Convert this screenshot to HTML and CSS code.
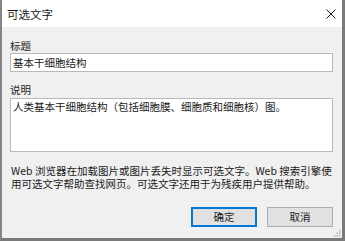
FILE: index.html
```html
<!DOCTYPE html>
<html lang="zh-CN">
<head>
<meta charset="utf-8">
<title>可选文字</title>
<link rel="stylesheet" href="styles.css">
</head>
<body>
<div class="dialog">
  <div class="titlebar">
    <span class="title">可选文字</span>
    <svg class="close" width="10" height="10" viewBox="0 0 10 10"><path d="M0.5 0.5 L9.5 9.5 M9.5 0.5 L0.5 9.5" stroke="#1a1a1a" stroke-width="1" fill="none"/></svg>
  </div>
  <div class="content">
    <div class="label">标题</div>
    <div class="field">基本干细胞结构</div>
    <div class="label label-2">说明</div>
    <div class="field area">人类基本干细胞结构（包括细胞膜、细胞质和细胞核）图。</div>
    <p class="help">Web 浏览器在加载图片或图片丢失时显示可选文字。Web 搜索引擎使用可选文字帮助查找网页。可选文字还用于为残疾用户提供帮助。</p>
    <div class="buttons">
      <div class="btn btn-default">确定</div>
      <div class="btn">取消</div>
    </div>
  </div>
  <svg class="grip" width="7" height="7" viewBox="0 0 7 7">
    <rect x="5" y="0" width="1.5" height="1.5" fill="#b0b0b0"/>
    <rect x="2.5" y="2.5" width="1.5" height="1.5" fill="#b0b0b0"/>
    <rect x="5" y="2.5" width="1.5" height="1.5" fill="#b0b0b0"/>
    <rect x="0" y="5" width="1.5" height="1.5" fill="#b0b0b0"/>
    <rect x="2.5" y="5" width="1.5" height="1.5" fill="#b0b0b0"/>
    <rect x="5" y="5" width="1.5" height="1.5" fill="#b0b0b0"/>
  </svg>
</div>
</body>
</html>
```
FILE: styles.css
```css
html, body {
  margin: 0;
  padding: 0;
}
body {
  width: 345px;
  height: 241px;
  overflow: hidden;
  font-family: "Noto Sans CJK SC", "Noto Sans", sans-serif;
  color: #1a1a1a;
}
.dialog {
  position: relative;
  box-sizing: border-box;
  width: 345px;
  height: 241px;
  background: #f0f0f0;
  border-left: 2px solid #858585;
  border-right: 3px solid #7a7a7a;
  border-bottom: 3px solid #7a7a7a;
  display: flex;
  flex-direction: column;
}
.titlebar {
  height: 27px;
  background: #ffffff;
  display: flex;
  align-items: center;
  justify-content: space-between;
  padding: 0 5px 0 5px;
  flex: none;
}
.title {
  font-size: 11.5px;
  line-height: 14px;
  margin-top: 1px;
}
.close {
  margin-right: 1px;
}
.content {
  padding: 0 9px 0 8px;
  display: flex;
  flex-direction: column;
}
.label {
  font-size: 10.5px;
  line-height: 14px;
  margin-top: 12px;
}
.label-2 {
  margin-top: 11px;
}
.field {
  box-sizing: border-box;
  height: 19px;
  background: #ffffff;
  border: 1px solid #b9b9b9;
  font-size: 10.5px;
  line-height: 17px;
  padding: 0 2px;
  white-space: nowrap;
}
.field.area {
  margin-top: 1px;
  height: 54px;
  line-height: 14px;
  padding-top: 1px;
}
.help {
  margin: 13px -2px 0 1px;
  font-size: 10.5px;
  line-height: 12.5px;
}
.buttons {
  margin-top: 17px;
  display: flex;
  justify-content: flex-end;
  gap: 10px;
  padding-right: 0;
}
.btn {
  box-sizing: border-box;
  width: 66px;
  height: 20px;
  background: #e1e1e1;
  border: 1px solid #adadad;
  font-size: 10.5px;
  line-height: 18px;
  text-align: center;
}
.btn-default {
  border: 2px solid #0078d7;
  line-height: 16px;
}
.grip {
  position: absolute;
  right: 1px;
  bottom: 1px;
}
```
